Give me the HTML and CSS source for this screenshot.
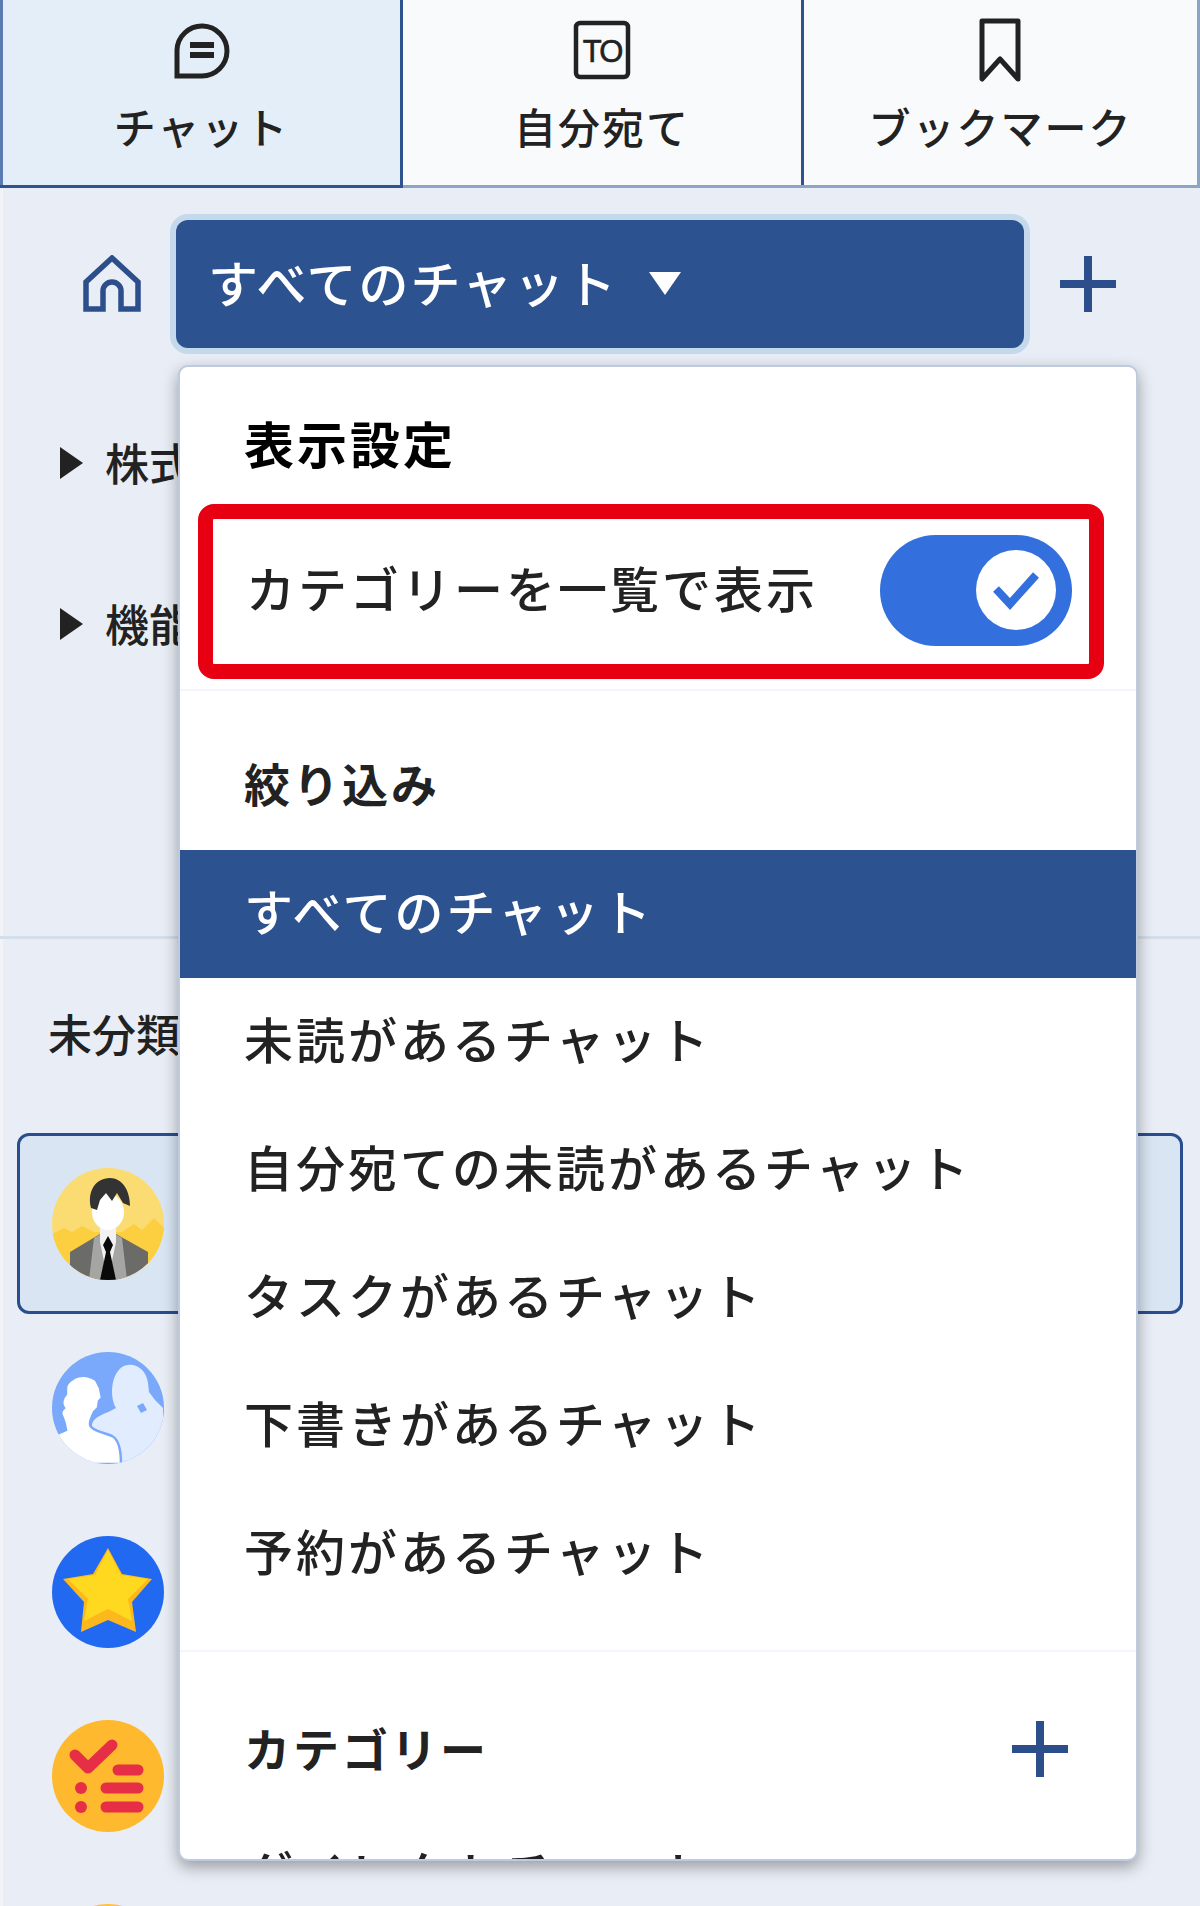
FILE: index.html
```html
<!DOCTYPE html>
<html lang="ja">
<head>
    <meta charset="UTF-8">
    <link rel="stylesheet" href="styles.css">
</head>
<body>
    <div class="tabs">
        <div class="tab active">
            <svg class="tab-icon" width="60" height="64" viewBox="0 0 60 64">
                <path d="M5 58V32a25 25 0 1 1 25 26z" fill="none" stroke="#222" stroke-width="5"/>
                <path d="M18 27h24M18 37h24" stroke="#222" stroke-width="6"/>
            </svg>
            <span>チャット</span>
        </div>
        <div class="tab">
            <svg class="tab-icon" width="60" height="64" viewBox="0 0 60 64">
                <rect x="4" y="5" width="52" height="54" rx="4" fill="none" stroke="#222" stroke-width="4.5"/>
                <text x="30" y="44" text-anchor="middle" class="to-text">TO</text>
            </svg>
            <span>自分宛て</span>
        </div>
        <div class="tab">
            <svg class="tab-icon" width="60" height="64" viewBox="0 0 60 64">
                <path d="M11 3h36v58L29 41 11 61z" fill="none" stroke="#222" stroke-width="5" stroke-linejoin="round"/>
            </svg>
            <span>ブックマーク</span>
        </div>
    </div>

    <div class="header">
        <svg class="home" width="58" height="58" viewBox="0 0 58 58">
            <path d="M3 54V27L29 3l26 24v27H38V36a9 9 0 0 0-18 0v18z" fill="none" stroke="#2c4f8c" stroke-width="5.5"/>
        </svg>
        <div class="select-btn">
            <span class="select-label">すべてのチャット</span>
            <span class="caret"></span>
        </div>
        <svg class="plus" width="58" height="58" viewBox="0 0 58 58">
            <path d="M29 1v56M1 29h56" stroke="#2c4f8c" stroke-width="8"/>
        </svg>
    </div>

    <div class="tree">
        <div class="tree-row"><span class="arrow"></span><span class="tree-name">株式会社</span></div>
        <div class="tree-row"><span class="arrow"></span><span class="tree-name">機能</span></div>
    </div>

    <div class="uncategorized">未分類</div>

    <div class="room-list">
        <div class="room selected">
            <svg class="avatar" width="112" height="112" viewBox="0 0 112 112">
                <clipPath id="c1"><circle cx="56" cy="56" r="56"/></clipPath>
                <g clip-path="url(#c1)">
                    <rect width="112" height="112" fill="#fbdc72"/>
                    <path d="M0 66l12-6 8 4 10-6 12 6h28l12-8 8 6 12-12 10 10v52H0z" fill="#fbcf3f"/>
                    <path d="M18 112V84l30-18h16l32 18v28z" fill="#6b6b68"/>
                    <path d="M42 70l14-8 14 8 5 42H37z" fill="#a5a5a3"/>
                    <path d="M48 60h16v14l-8 38-8-38z" fill="#f2f2f2"/>
                    <path d="M56 68l5 9-3 7 6 28H48l6-28-3-7z" fill="#0a0a0a"/>
                    <ellipse cx="56" cy="44" rx="16" ry="18" fill="#fff"/>
                    <path d="M39 40c-4-16 4-30 19-30 12 0 20 12 20 28l-7-3-6-10-5 8-6-8-6 7-3 10z" fill="#333"/>
                </g>
            </svg>
        </div>
        <div class="room">
            <svg class="avatar" width="112" height="112" viewBox="0 0 112 112">
                <clipPath id="c2"><circle cx="56" cy="56" r="56"/></clipPath>
                <g clip-path="url(#c2)">
                    <rect width="112" height="112" fill="#7aa8fb"/>
                    <path d="M64 56C58 46 58 24 70 15c10-6 24 0 26 16l1 9 6 8 8 8v56H40V72c2-8 14-10 24-16z" fill="#e2ecff"/>
                    <path d="M14 36c0-6 6-8 8-10 8-4 16-2 22 2l4 8 2 10-3 3-1 7-4 4c-2 4-4 8-4 12 0 6 12 8 22 12 8 4 9 18 9 28H0V84l14-6c-1-6-2-10-4-14-2-4 0-6 2-8-3-4-2-10 2-14z" fill="#fff" stroke="#7aa8fb" stroke-width="2.5"/>
                    <path d="M85 54l6-3 4 7-6 3z" fill="#7aa8fb"/>
                </g>
            </svg>
        </div>
        <div class="room">
            <svg class="avatar" width="112" height="112" viewBox="0 0 112 112">
                <circle cx="56" cy="56" r="56" fill="#2169f0"/>
                <path d="M56 12l14 26 30 5-20 23 4 30-28-12-27 12 3-30-21-23 30-5z" fill="#fdb81e"/>
                <path d="M56 14l13 25 27 4-20 20 4 22-24-12-24 12 4-22-20-20 27-4z" fill="#ffd91f"/>
            </svg>
        </div>
        <div class="room">
            <svg class="avatar" width="112" height="112" viewBox="0 0 112 112">
                <circle cx="56" cy="56" r="56" fill="#ffb92e"/>
                <path d="M23 35l13 13 24-23" fill="none" stroke="#e62e46" stroke-width="11" stroke-linecap="round" stroke-linejoin="round"/>
                <path d="M66 50h20M54 68h32M54 87h32" stroke="#e62e46" stroke-width="11" stroke-linecap="round"/>
                <circle cx="29" cy="68" r="6" fill="#e62e46"/>
                <circle cx="29" cy="87" r="6" fill="#e62e46"/>
            </svg>
        </div>
        <div class="room">
            <svg class="avatar" width="112" height="112" viewBox="0 0 112 112">
                <circle cx="56" cy="56" r="56" fill="#fbc33e"/>
            </svg>
        </div>
    </div>

    <div class="menu">
        <div class="menu-title first">表示設定</div>
        <div class="toggle-row">
            <span class="toggle-label">カテゴリーを一覧で表示</span>
            <div class="toggle">
                <div class="knob">
                    <svg width="48" height="40" viewBox="0 0 48 40">
                        <path d="M4 19l14 15L44 5" fill="none" stroke="#3370dd" stroke-width="8"/>
                    </svg>
                </div>
            </div>
        </div>
        <div class="menu-sep"></div>
        <div class="menu-title">絞り込み</div>
        <div class="menu-item current">すべてのチャット</div>
        <div class="menu-item">未読があるチャット</div>
        <div class="menu-item">自分宛ての未読があるチャット</div>
        <div class="menu-item">タスクがあるチャット</div>
        <div class="menu-item">下書きがあるチャット</div>
        <div class="menu-item">予約があるチャット</div>
        <div class="menu-sep low"></div>
        <div class="menu-title with-plus">
            <span class="title-label">カテゴリー</span>
            <svg width="58" height="58" viewBox="0 0 58 58">
                <path d="M29 1v56M1 29h56" stroke="#2c4f8c" stroke-width="8"/>
            </svg>
        </div>
        <div class="menu-item">ダイレクトチャット</div>
    </div>
</body>
</html>
```

FILE: styles.css
```css
html, body {
    height: 100%;
}
body {
    margin: 0;
    position: relative;
    overflow: hidden;
    background: linear-gradient(90deg, #f1f3f9 3px, #e9edf5 3px);
    color: #222;
    font-family: "Noto Sans CJK JP", "Noto Sans", sans-serif;
    font-weight: 500;
}

/* top tabs */
.tabs {
    display: grid;
    grid-template-columns: 403px 401px 396px;
    height: 188px;
    box-sizing: border-box;
    border-bottom: 3px solid #8da4c4;
}
.tab {
    display: flex;
    flex-direction: column;
    align-items: center;
    background-color: #f9fafc;
    border-right: 3px solid #2f5290;
    font-size: 42px;
    letter-spacing: 2px;
    line-height: 60px;
}
.tab:last-child {
    border-right-color: #8da4c4;
}
.tab.active {
    background-color: #e4eef9;
    border-left: 3px solid #5a7cb0;
    box-shadow: 0 3px 0 #2f5290;
}
.tab-icon {
    margin-top: 18px;
    margin-bottom: 14px;
}
.to-text {
    font-family: "Liberation Sans", sans-serif;
    font-size: 31px;
    letter-spacing: -2px;
    stroke: #222;
    stroke-width: 0.6;
    fill: #222;
}

/* chat selector */
.header {
    display: flex;
    align-items: center;
    margin-top: 32px;
    height: 128px;
}
.home {
    margin-left: 83px;
    margin-right: 35px;
}
.select-btn {
    display: flex;
    align-items: center;
    width: 848px;
    height: 128px;
    box-sizing: border-box;
    padding-left: 32px;
    border-radius: 12px;
    background-color: #2d5290;
    box-shadow: 0 0 0 6px #c5d9ec;
    color: #fff;
    font-size: 50px;
    letter-spacing: 2px;
}
.select-label {
    padding-bottom: 6px;
}
.caret {
    width: 0;
    height: 0;
    margin-left: 31px;
    margin-bottom: 2px;
    border-left: 16px solid transparent;
    border-right: 16px solid transparent;
    border-top: 23px solid #fff;
}
.plus {
    margin-left: 35px;
}

/* tree behind the menu */
.tree {
    margin-top: 34px;
    height: 554px;
    padding-left: 60px;
    border-bottom: 3px solid #d3deea;
}
.tree-row {
    display: flex;
    align-items: center;
    height: 161px;
    font-size: 44px;
}
.tree-name {
    padding-bottom: 2px;
}
.arrow {
    width: 0;
    height: 0;
    margin-right: 22px;
    border-top: 16px solid transparent;
    border-bottom: 16px solid transparent;
    border-left: 23px solid #222;
}
.uncategorized {
    margin-top: 63px;
    padding-left: 48px;
    height: 68px;
    line-height: 62px;
    font-size: 44px;
}

/* chat rooms */
.room-list {
    margin-top: 63px;
    height: 773px;
    overflow: hidden;
    display: flex;
    flex-direction: column;
    gap: 3px;
}
.room {
    display: flex;
    flex: none;
    align-items: center;
    height: 181px;
    margin: 0 17px;
    box-sizing: border-box;
    padding-left: 35px;
}
.room.selected {
    padding-left: 32px;
    border: 3px solid #2a4d8f;
    border-radius: 12px;
    background-color: #d9e5f3;
}
.avatar {
    flex: none;
}

/* dropdown */
.menu {
    position: absolute;
    left: 178px;
    top: 365px;
    width: 960px;
    height: 1496px;
    box-sizing: border-box;
    overflow: hidden;
    background-color: #fff;
    border: 2px solid #bccbdf;
    border-radius: 10px;
    box-shadow: 0 6px 16px rgba(0, 0, 0, 0.35);
    font-size: 49px;
    letter-spacing: 3px;
}
.menu-title {
    margin: 66px 0 33px;
    padding-left: 64px;
    height: 60px;
    line-height: 50px;
    font-size: 46px;
    font-weight: 700;
}
.menu-title.first {
    margin: 49px 0 28px;
    line-height: 53px;
    font-size: 50px;
    color: #000;
}
.menu-title.with-plus {
    display: flex;
    align-items: center;
    justify-content: space-between;
    margin-top: 67px;
    padding-right: 67px;
}
.title-label {
    padding-bottom: 4px;
}
.toggle-row {
    display: flex;
    align-items: center;
    justify-content: space-between;
    height: 175px;
    margin: 0 32px 0 18px;
    box-sizing: border-box;
    padding: 0 17px 0 33px;
    border: 15px solid #e60012;
    border-radius: 16px;
}
.toggle-label {
    padding-bottom: 10px;
}
.toggle {
    display: flex;
    align-items: center;
    justify-content: flex-end;
    width: 192px;
    height: 111px;
    margin-bottom: 3px;
    box-sizing: border-box;
    padding-right: 16px;
    border-radius: 56px;
    background-color: #3370dd;
}
.knob {
    display: flex;
    align-items: center;
    justify-content: center;
    width: 80px;
    height: 80px;
    border-radius: 50%;
    background-color: #fff;
}
.menu-sep {
    height: 2px;
    margin-top: 10px;
    background-color: #f5f6fb;
}
.menu-sep.low {
    margin-top: 32px;
}
.menu-item {
    height: 128px;
    line-height: 120px;
    padding-left: 64px;
    white-space: nowrap;
}
.menu-item.current {
    background-color: #2d5290;
    color: #fff;
}
```
